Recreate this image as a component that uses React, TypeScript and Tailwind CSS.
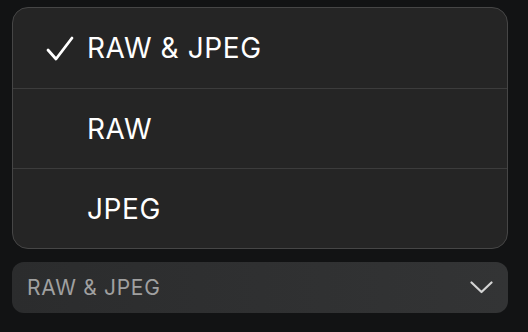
import React from "react";

export default function App() {
  const items = ["RAW & JPEG", "RAW", "JPEG"];
  return (
    <div
      className="w-[528px] h-[332px] bg-[#121314] pt-[7px] pl-[12px] pr-[20px] flex flex-col"
      style={{ fontFamily: "Inter, 'Liberation Sans', sans-serif" }}
    >
      <div className="rounded-[16px] border border-[#464646] bg-[#252525] flex flex-col overflow-hidden">
        {items.map((t, i) => (
          <div
            key={t}
            className={`h-[80px] flex items-center relative ${i > 0 ? "border-t border-[#3c3c3c]" : ""}`}
          >
            <div className="w-[74px] flex justify-start pl-[33px]">
              {i === 0 && (
                <svg width="28" height="25" viewBox="0 0 28 25" fill="none">
                  <polyline
                    points="2,14 10,23 26,2"
                    stroke="#ffffff"
                    strokeWidth="2.8"
                    strokeLinecap="round"
                    strokeLinejoin="round"
                  />
                </svg>
              )}
            </div>
            <span className="text-[28px] tracking-[0.6px] text-white font-normal leading-none">{t}</span>
          </div>
        ))}
      </div>
      <div className="mt-[13px] h-[51px] rounded-[12px] bg-gradient-to-r from-[#2b2c2d] to-[#333435] flex items-center justify-between pl-[15px] pr-[15px]">
        <span className="text-[21px] tracking-[0.7px] text-[#a0a0a0] leading-none">RAW &amp; JPEG</span>
        <svg width="23" height="13" viewBox="0 0 23 13" fill="none">
          <polyline
            points="1.5,1.5 11.5,11 21.5,1.5"
            stroke="#d4d4d4"
            strokeWidth="2.2"
            strokeLinecap="round"
            strokeLinejoin="round"
          />
        </svg>
      </div>
    </div>
  );
}
